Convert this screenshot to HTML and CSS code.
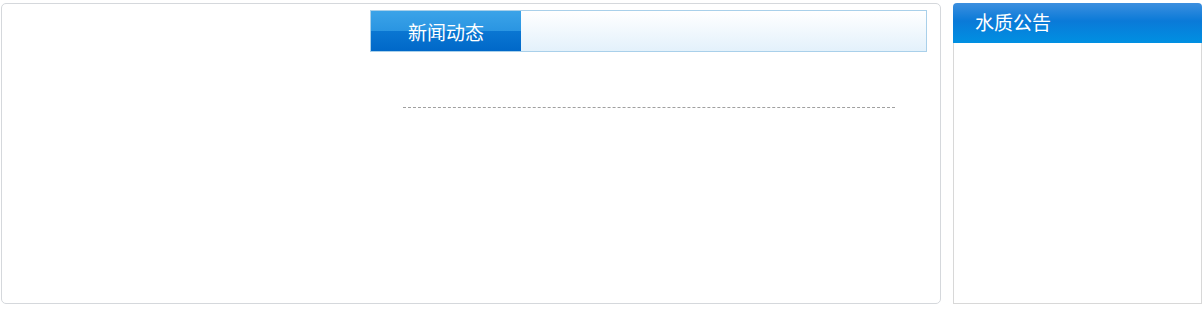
FILE: index.html
```html
<!DOCTYPE html>
<html>
<head>
  <meta charset="UTF-8">
  <title>新闻动态</title>
  <link rel="stylesheet" href="styles.css">
</head>
<body>
  <div class="main">
    <div class="news-box">
      <div class="news">
        <div class="tab-bar">
          <div class="tab">新闻动态</div>
        </div>
        <ul class="news-list">
          <li></li>
        </ul>
      </div>
    </div>

    <div class="notice">
      <div class="notice-title">水质公告</div>
      <div class="notice-body"></div>
    </div>
  </div>
</body>
</html>
```

FILE: styles.css
```css
body {
  margin: 0;
  padding: 3px 0 0 1px;
  background-color: #fff;
  font-family: "Noto Sans CJK SC", "Liberation Sans", sans-serif;
}

.main {
  display: flex;
  gap: 12px;
}

.news-box {
  width: 940px;
  height: 301px;
  box-sizing: border-box;
  border: 1px solid #d5d8dc;
  border-radius: 5px;
  padding: 6px 0 0 368px;
}

.news {
  width: 557px;
}

.tab-bar {
  height: 42px;
  box-sizing: border-box;
  border: 1px solid #a9d0ea;
  background: linear-gradient(to bottom, #ffffff, #e3f1fb);
}

.tab {
  width: 150px;
  height: 40px;
  line-height: 42px;
  text-align: center;
  color: #fff;
  font-size: 19px;
  background: linear-gradient(to bottom, #3ba3e8 0%, #2a95e2 50%, #0a76d2 51%, #0068c8 100%);
}

.news-list {
  list-style: none;
  margin: 0;
  padding: 0 32px 0 33px;
}

.news-list li {
  height: 55px;
  border-bottom: 1px dashed #a0a0a0;
}

.notice {
  width: 249px;
  height: 301px;
  display: flex;
  flex-direction: column;
}

.notice-title {
  height: 40px;
  line-height: 38px;
  padding-left: 22px;
  color: #fff;
  font-size: 19px;
  border-radius: 4px 4px 0 0;
  background: linear-gradient(to bottom, #3c8fdf 0%, #0a7ad8 45%, #0090e2 100%);
}

.notice-body {
  flex: 1;
  border: 1px solid #d8d8d8;
  border-top: none;
}
```
